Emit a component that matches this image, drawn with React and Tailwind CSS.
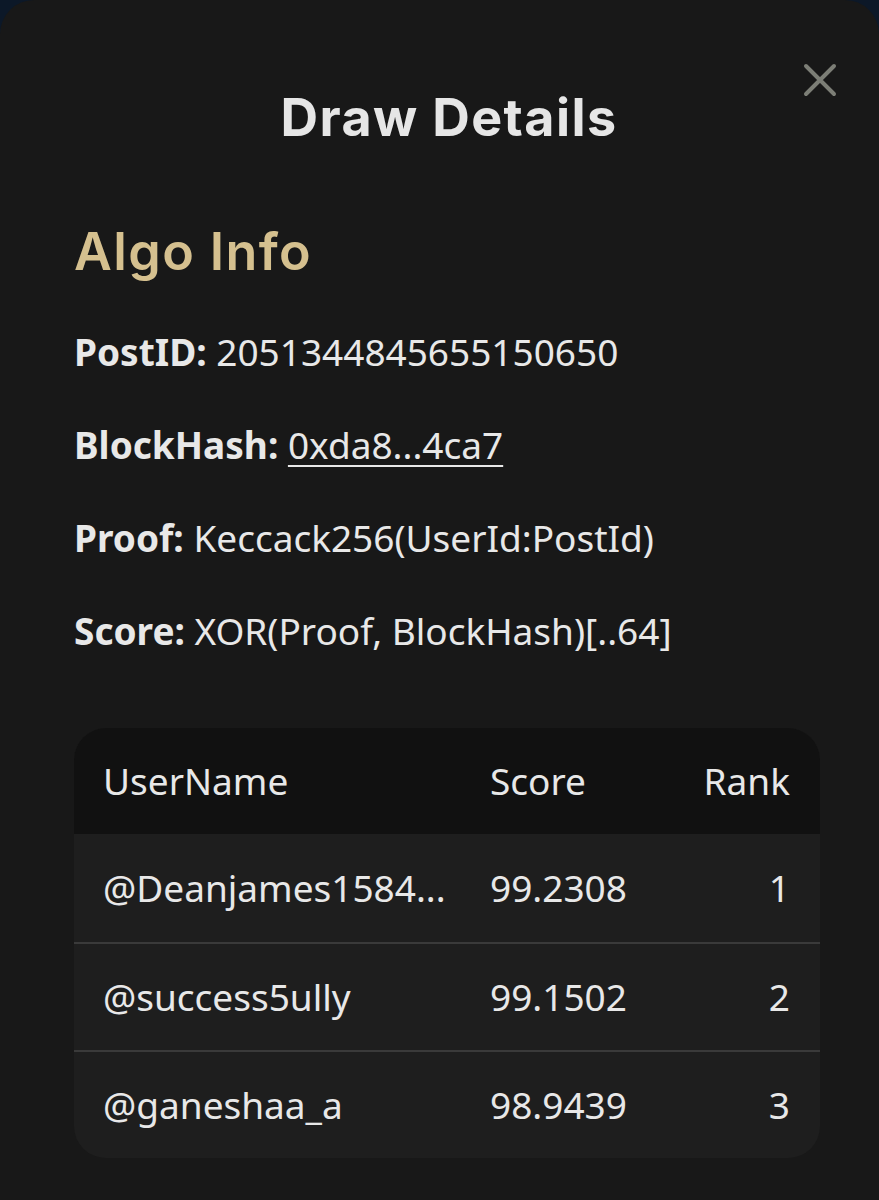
import React from 'react';

const info = [
  { label: 'PostID:', value: '2051344845655150650' },
  { label: 'BlockHash:', value: '0xda8...4ca7', link: true },
  { label: 'Proof:', value: 'Keccack256(UserId:PostId)' },
  { label: 'Score:', value: 'XOR(Proof, BlockHash)[..64]' },
];

const rows = [
  { user: '@Deanjames1584...', score: '99.2308', rank: 1 },
  { user: '@success5ully', score: '99.1502', rank: 2 },
  { user: '@ganeshaa_a', score: '98.9439', rank: 3 },
];

export default function App() {
  return (
    <div className="w-[879px] h-[1200px] bg-[#0c1828] overflow-hidden" style={{ fontFamily: '"Noto Sans", "Open Sans", sans-serif' }}>
      <div className="relative h-[1200px] bg-[#181818] rounded-t-[34px] pl-[74px] pr-[59px] text-[#e8e8e8]">
        <button className="absolute top-[63px] right-[42px] w-[34px] h-[34px] text-[#7c7e76]">
          <svg viewBox="0 0 34 34" className="w-full h-full" fill="none" stroke="currentColor" strokeWidth="4" strokeLinecap="round">
            <path d="M3 3 L31 31 M31 3 L3 31" />
          </svg>
        </button>

        <h2 className="pt-[90px] text-center text-[52px] leading-[56px] font-bold tracking-[1.4px] text-[#e6e6e6] pl-[4px]" style={{ fontFamily: 'Inter, "Noto Sans", sans-serif' }}>
          Draw Details
        </h2>

        <h3 className="mt-[78px] text-[52px] leading-[56px] font-semibold tracking-[1.4px] text-[#d5c08f]" style={{ fontFamily: 'Inter, "Noto Sans", sans-serif' }}>
          Algo Info
        </h3>

        <div className="mt-[50px] flex flex-col gap-[49px]">
          {info.map((item) => (
            <p key={item.label} className="text-[37px] leading-[44px]">
              <span className="font-bold">{item.label}</span>{' '}
              <span className={item.link ? 'underline underline-offset-[6px] decoration-2' : ''}>{item.value}</span>
            </p>
          ))}
        </div>

        <div className="mt-[75px] rounded-[32px] overflow-hidden bg-[#1e1e1e]">
          <div className="flex items-center h-[106px] bg-[#111111] pl-[29px] pr-[30px] text-[37px]">
            <span className="w-[387px]">UserName</span>
            <span className="flex-1">Score</span>
            <span className="text-right">Rank</span>
          </div>
          {rows.map((r, i) => (
            <div key={r.user} className={`flex items-center h-[108px] pl-[29px] pr-[30px] text-[37px] ${i > 0 ? 'border-t-2 border-[#3a3a3a]' : ''}`}>
              <span className="w-[387px] truncate">{r.user}</span>
              <span className="flex-1">{r.score}</span>
              <span className="text-right">{r.rank}</span>
            </div>
          ))}
        </div>
      </div>
    </div>
  );
}
